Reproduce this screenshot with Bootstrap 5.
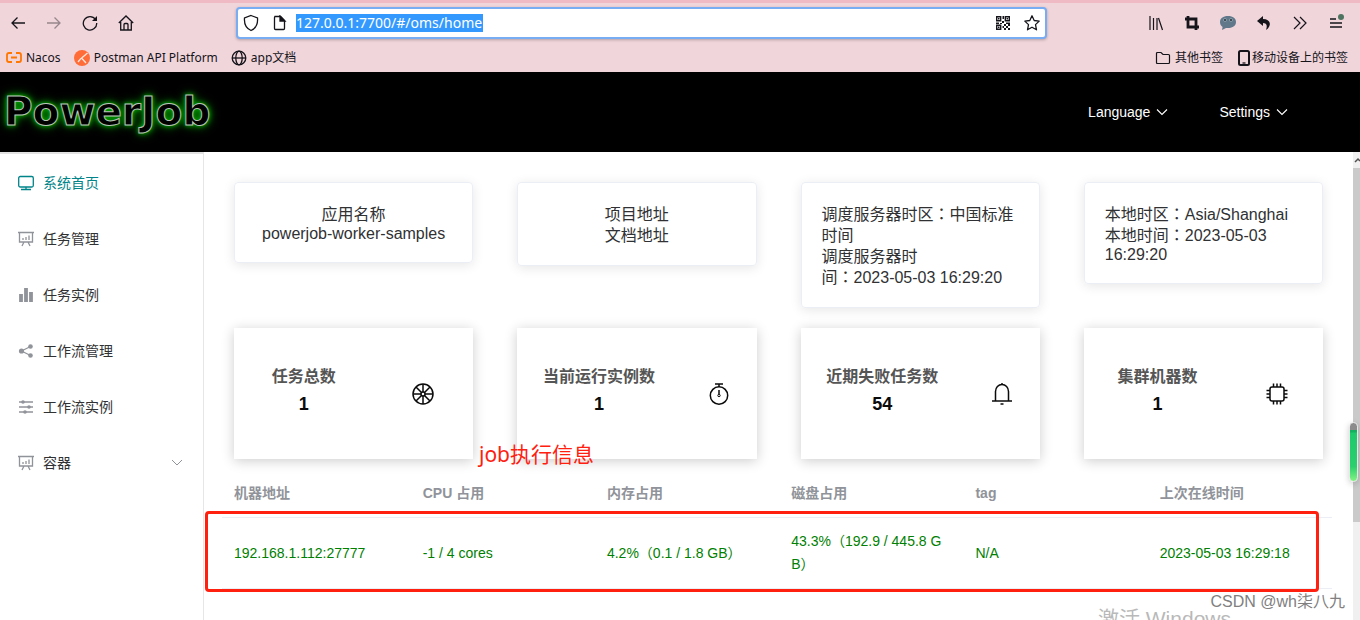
<!DOCTYPE html>
<html lang="zh-CN">
<head>
<meta charset="utf-8">
<meta name="viewport" content="width=device-width, initial-scale=1">
<title>PowerJob</title>
<link href="https://cdn.jsdelivr.net/npm/bootstrap@5.3.0/dist/css/bootstrap.min.css" rel="stylesheet">
<style>
:root{--ui:"Liberation Sans","Noto Sans CJK SC",sans-serif;--chrome:"Noto Sans","Noto Sans CJK SC",sans-serif}
body{font-family:var(--ui);color:#303133;font-size:14px}
svg{display:block;flex:none;fill:none;stroke:currentColor;stroke-width:1.5}
button,a{color:inherit}
/* browser frame */
.browser{background:#f0d5da;border-top:3px solid #efbac3;height:72px;font-family:var(--chrome);color:#15141a}
.toolbar{height:40px;padding-right:6px}
.toolbar svg{stroke-width:1.3}
.tool{width:36px;height:32px;border:0;background:none;padding:0;display:flex;align-items:center;justify-content:center}
.tool:disabled{opacity:.4;color:inherit}
.address{height:32px;margin:0 91px 0 92px;padding:0 4px;border:2px solid #78adf3;border-radius:4px;background:#fff;box-shadow:0 1px 3px rgba(0,0,0,.25)}
.address input{width:187px;height:18px;border:0;padding:0;background:#3399ff;color:#fff;font-size:14px;line-height:18px;outline:0}
.marks{height:29px;font-size:12px;padding:0 12px 0 6px;gap:13px}
.marks a{color:inherit;text-decoration:none;display:flex;align-items:center}
.marks svg{stroke-width:1.3}
/* application */
.topbar{background:#000;height:80px;color:#fff}
.logo{font:bold 39px/48px "DejaVu Sans",sans-serif;color:#000;text-decoration:none;-webkit-text-stroke:1px #b8c4b8;text-shadow:0 0 4px #0a0,0 0 7px #090,0 0 12px #070}
.menus{gap:51px}
.topbar button{border:0;background:none;padding:0;display:flex;align-items:center;gap:6px;color:#fff}
.side{width:204px;border-right:1px solid #e6e6e6;border-top:2px solid #e2e2e2;padding-top:1px}
.side a{height:56px;display:flex;align-items:center;gap:9px;padding:0 20px 0 18px;text-decoration:none;color:#303133}
.side svg{color:#909399;stroke-width:1}
.side a.active,.side a.active svg{color:#008489}
.main{padding:30px 8px 0;min-width:0}
.tiles{--bs-gutter-x:44px;margin:0 0 20px}
.info{border:1px solid #ebeef5;border-radius:4px;padding:21px 20px 19px;font-size:16px;box-shadow:0 2px 12px rgba(0,0,0,.1);line-height:21px}
.info .latin{line-height:18px}
.colon{font-family:"Noto Sans CJK TC",sans-serif;line-height:1}
.stat{height:131px;box-shadow:0 2px 12px rgba(0,0,0,.2);color:#0b0b0b;line-height:21px}
.stat .figure-text{padding-bottom:6px}
.stat h2{font-size:16px;line-height:21px;margin:0 0 7px;font-weight:bold;color:#555}
.stat strong{font-size:18px}
.machines{margin:-9px 13px 0 10px}
.machines table{table-layout:fixed;width:100%;border-collapse:collapse;line-height:23px}
.machines th,.machines td{padding:12px;border-bottom:1px solid #ebeef5;word-break:break-all}
.machines th{color:#909399}
.machines td{color:#008000;height:71px;vertical-align:middle}
.machines col:first-child{width:17%}
.frame{position:absolute;left:-17px;right:13px;top:41px;bottom:-3px;border:3px solid #ff2010;border-radius:4px}
.remark{position:absolute;left:257px;top:-30px;font:21px/28px var(--chrome);color:#ff2010}
.scroll{width:7px;background:#f0f0f0}
.scroll svg{height:16px;color:#505050}
.thumb{background:#cacaca;height:354px}
.gauge{position:absolute;right:2px;top:422px;width:9px;height:60px;border:1px solid #e8e8e8;border-radius:5px;background:linear-gradient(#8c8c8c 7px,#16ae60 7px,#16ae60 9px,#1ec96c 10px,#2bcf6d 75%,#83f383);box-shadow:0 2px 6px rgba(0,0,0,.2)}
.activate{position:absolute;right:129px;bottom:-12px;font-size:21px;line-height:26px;color:#b9b9b9}
.credit{position:absolute;right:15px;bottom:6px;font:16px/24px "Liberation Sans","Noto Sans CJK SC",sans-serif;color:#808080}
</style>
</head>
<body class="vh-100 overflow-hidden d-flex flex-column position-relative">
<header class="browser flex-shrink-0">
  <div class="toolbar d-flex align-items-center">
    <button class="tool" aria-label="后退"><svg width="16" height="16" viewBox="0 0 16 16"><path d="M15 8H2M7.500 2.500 2 8l5.500 5.500"/></svg></button>
    <button class="tool" aria-label="前进" disabled><svg width="16" height="16" viewBox="0 0 16 16"><path d="M1 8h13M8.500 2.500 14 8l-5.500 5.500"/></svg></button>
    <button class="tool" aria-label="刷新"><svg width="16" height="16" viewBox="0 0 16 16"><path d="M13.500 4.500A6.700 6.700 0 1 0 14.700 8"/><path d="M15 1v5h-5z" fill="currentColor" stroke="none"/></svg></button>
    <button class="tool" aria-label="主页"><svg width="16" height="16" viewBox="0 0 16 16"><path d="M.8 8 8 1l7.200 7M2.700 7v8h10.600V7M6 15V9.500q0-1 1-1h2q1 0 1 1V15"/></svg></button>
    <div class="address d-flex align-items-center flex-grow-1">
      <svg width="18" height="18" viewBox="0 0 18 18"><path d="M9 1.500 15.500 4C16 10 13.500 14.500 9 16.500 4.500 14.500 2 10 2.500 4z"/></svg>
      <svg class="mx-2 ps-1" width="20" height="16" viewBox="0 0 16 16"><path d="M2.500 1.500h6l4 4v8q0 1-1 1h-8q-1 0-1-1v-11q0-1 1-1z"/><path d="M8 1v5h5z" fill="currentColor"/></svg>
      <input type="text" value="127.0.0.1:7700/#/oms/home" aria-label="地址">
      <svg class="ms-auto" width="16" height="16" viewBox="0 0 16 16"><path d="M1.700 1.700h4v4h-4zM10.300 1.700h4v4h-4zM1.700 10.300h4v4h-4z" stroke-width="1.400"/><path d="M3 3h1.500v1.500H3zM11.500 3H13v1.500h-1.500zM3 11.500h1.500V13H3zM7.500 1H9v3H7.500zM7 6h2v2H7zM1 7.500h3V9H1zM11 7.500h4V9h-4zM9 9h2v2H9zM11 11h2v2h-2zM13 9h2v2h-2zM9 13h2v2H9zM13 13h2v2h-2zM7.500 11H9v2H7.500zM5 8h2v1H5z" fill="currentColor" stroke="none"/></svg>
      <svg class="ms-2 ps-1" width="22" height="18" viewBox="0 0 18 18"><path d="m9 1.800 2.200 4.700 5 .6-3.700 3.500 1 5.200L9 13.200l-4.500 2.600 1-5.200L1.800 7.100l5-.6z" stroke-linejoin="round"/></svg>
    </div>
    <button class="tool" aria-label="书库"><svg width="16" height="16" viewBox="0 0 16 16"><path d="M2 1v14M5.500 3v12M9 3v12M10.500 3l4 12" stroke-width="1.200"/></svg></button>
    <button class="tool" aria-label="截图"><svg width="16" height="16" viewBox="0 0 16 16"><path d="M4 1v11h11M1 4h11v11" stroke-width="2.800"/></svg></button>
    <button class="tool" aria-label="消息"><svg width="18" height="16" viewBox="0 0 18 16"><path d="M9 1c5 0 8 2.500 8 6s-3 6-8 6H7l-4 2 .6-3C2 11 1 9 1 7c0-3.500 3-6 8-6z" fill="#60788a" stroke="none"/><circle cx="6" cy="5" r="1.600" fill="#38444d" stroke="#92a5b2" stroke-width=".8"/><circle cx="12" cy="5" r="1.600" fill="#38444d" stroke="#92a5b2" stroke-width=".8"/></svg></button>
    <button class="tool" aria-label="撤销"><svg width="16" height="16" viewBox="0 0 16 16"><path d="M7 1 1 6l6 5V8c4 0 4.500 3 3 7 6-4 5-11-3-11z" fill="currentColor" stroke="none"/></svg></button>
    <button class="tool" aria-label="更多工具"><svg width="16" height="16" viewBox="0 0 16 16"><path d="m2 2 6 6-6 6M8 2l6 6-6 6" stroke-width="1.200"/></svg></button>
    <button class="tool" aria-label="菜单"><svg width="18" height="18" viewBox="0 0 18 18"><path d="M3 5h6M3 9h12M3 13h12"/><circle cx="14" cy="3" r="3" fill="#4e7460" stroke="none"/></svg></button>
  </div>
  <nav class="marks d-flex align-items-center">
    <a href="#"><svg class="me-1" width="16" height="14" viewBox="0 0 16 14" color="#ff7600"><path d="M6 2H3Q1 2 1 4v5q0 2 2 2h3M10 2h3q2 0 2 2v5q0 2-2 2h-3M5 6.500h6" stroke-width="1.800"/></svg>Nacos</a>
    <a href="#"><svg class="me-1" width="16" height="16" viewBox="0 0 16 16"><circle cx="8" cy="8" r="8" fill="#ff6c37" stroke="none"/><path d="m13.500 3-7 6M8 8.500l4 4.500M6.500 9 4 12" stroke="#ffe5dc" stroke-width="1.300"/></svg>Postman API Platform</a>
    <a href="#"><svg class="me-1" width="16" height="16" viewBox="0 0 16 16"><circle cx="8" cy="8" r="6.800"/><ellipse cx="8" cy="8" rx="3.200" ry="6.800"/><path d="M1 8h14"/></svg>app文档</a>
    <a href="#" class="ms-auto"><svg class="me-1" width="16" height="16" viewBox="0 0 16 16"><path d="M2.500 2.500H6l2 2h5.500q1 0 1 1v7q0 1-1 1h-11q-1 0-1-1v-9q0-1 1-1z" stroke-width="1.200"/></svg>其他书签</a>
    <a href="#"><svg width="16" height="16" viewBox="0 0 16 16"><rect x="3" y="1" width="10" height="14" rx="1.500" stroke-width="2"/><path d="M6.500 13h3"/></svg>移动设备上的书签</a>
  </nav>
</header>
<div class="topbar d-flex align-items-center flex-shrink-0">
  <a class="logo ms-1" href="#">PowerJob</a>
  <div class="menus d-flex ms-auto me-5 pe-4">
    <button>Language<svg width="12" height="12" viewBox="0 0 12 12"><path d="m1 3.500 5 5 5-5" stroke-width="1.100"/></svg></button>
    <button>Settings<svg width="12" height="12" viewBox="0 0 12 12"><path d="m1 3.500 5 5 5-5" stroke-width="1.100"/></svg></button>
  </div>
</div>
<div class="d-flex flex-grow-1 overflow-hidden">
  <nav class="side flex-shrink-0">
    <a href="#" class="active"><svg width="16" height="16" viewBox="0 0 16 16"><rect x=".7" y="1.500" width="14.600" height="10.500" rx="1.500" stroke-width="1.300"/><path d="M8 12v2.500M3 14.500h10" stroke-width="1.300"/></svg>系统首页</a>
    <a href="#"><svg width="16" height="16" viewBox="0 0 16 16"><path d="M0 1.500h16M1.500 1.500V11h13V1.500M6 11l-2 4M10 11l2 4M5 7v2M8 6v3M11 4.500V9" stroke-width="1.300"/></svg>任务管理</a>
    <a href="#"><svg width="16" height="16" viewBox="0 0 16 16"><path d="M3 7v8M8 1v14M13 5v10" stroke-width="3.800"/></svg>任务实例</a>
    <a href="#"><svg width="16" height="16" viewBox="0 0 16 16"><path d="M12.500 3.500 3.500 8l9 4.500" stroke-width="1.200"/><g fill="currentColor" stroke="none"><circle cx="12.500" cy="3.500" r="2.300"/><circle cx="3.500" cy="8" r="2.600"/><circle cx="12.500" cy="12.500" r="2.300"/></g></svg>工作流管理</a>
    <a href="#"><svg width="16" height="16" viewBox="0 0 16 16"><path d="M1 3h14M1 8h14M1 13h14" stroke-width="1.300"/><g fill="currentColor" stroke="none"><circle cx="5" cy="3" r="1.800"/><circle cx="11" cy="8" r="1.800"/><circle cx="7" cy="13" r="1.800"/></g></svg>工作流实例</a>
    <a href="#"><svg width="16" height="16" viewBox="0 0 16 16"><path d="M0 1.500h16M1.500 1.500V11h13V1.500M6 11l-2 4M10 11l2 4M5 7v2M8 6v3M11 4.500V9" stroke-width="1.300"/></svg>容器<svg class="ms-auto" width="12" height="12" viewBox="0 0 12 12"><path d="m1 3 5 5 5-5"/></svg></a>
  </nav>
  <main class="main flex-grow-1">
    <div class="row tiles align-items-start">
      <div class="col-3"><div class="info text-center"><div>应用名称</div><div class="latin">powerjob-worker-samples</div></div></div>
      <div class="col-3"><div class="info text-center"><div>项目地址</div><div>文档地址</div></div></div>
      <div class="col-3"><div class="info"><div>调度服务器时区<span class="colon" lang="zh-TW">&#65306;</span>中国标准时间</div><div>调度服务器时<br>间<span class="colon" lang="zh-TW">&#65306;</span>2023-05-03 16:29:20</div></div></div>
      <div class="col-3"><div class="info"><div>本地时区<span class="colon" lang="zh-TW">&#65306;</span>Asia/Shanghai</div><div>本地时间<span class="colon" lang="zh-TW">&#65306;</span>2023-05-03</div><div class="latin">16:29:20</div></div></div>
    </div>
    <div class="row tiles">
      <div class="col-3"><div class="stat d-flex align-items-center justify-content-around"><div class="text-center figure-text"><h2>任务总数</h2><strong>1</strong></div>
        <svg width="24" height="24" viewBox="0 0 24 24"><circle cx="12" cy="12" r="10"/><circle cx="12" cy="12" r="2"/><path d="M12 2v8M12 14v8M2 12h8M14 12h8M5 5l5.500 5.500M13.500 13.500 19 19M19 5l-5.500 5.500M10.500 13.500 5 19"/></svg></div></div>
      <div class="col-3"><div class="stat d-flex align-items-center justify-content-around"><div class="text-center figure-text"><h2>当前运行实例数</h2><strong>1</strong></div>
        <svg width="24" height="24" viewBox="0 0 24 24"><circle cx="12" cy="13.500" r="8.700"/><path d="M8 2h8M12 2v3M12 8v4"/><circle cx="12" cy="13.500" r="1.200" stroke-width="1"/></svg></div></div>
      <div class="col-3"><div class="stat d-flex align-items-center justify-content-around"><div class="text-center figure-text"><h2>近期失败任务数</h2><strong>54</strong></div>
        <svg width="24" height="24" viewBox="0 0 24 24"><path d="M5.500 19V9.500a6.500 7 0 0 1 13 0V19M2 19h20M10.500 22h3M12 1v2"/></svg></div></div>
      <div class="col-3"><div class="stat d-flex align-items-center justify-content-around"><div class="text-center figure-text"><h2>集群机器数</h2><strong>1</strong></div>
        <svg width="24" height="24" viewBox="0 0 24 24"><rect x="5" y="5" width="14" height="14" rx="2"/><path d="M8.500 1.500V5M12 1.500V5M15.500 1.500V5M8.500 19v3.500M12 19v3.500M15.500 19v3.500M1.500 8.500H5M1.500 12H5M1.500 15.500H5M19 8.500h3.500M19 12h3.500M19 15.500h3.500"/></svg></div></div>
    </div>
    <div class="machines position-relative">
      <table>
        <colgroup><col><col><col><col><col><col></colgroup>
        <thead><tr><th>机器地址</th><th>CPU 占用</th><th>内存占用</th><th>磁盘占用</th><th>tag</th><th>上次在线时间</th></tr></thead>
        <tbody><tr><td>192.168.1.112:27777</td><td>-1 / 4 cores</td><td>4.2%&#65288;0.1 / 1.8 GB&#65289;</td><td>43.3%&#65288;192.9 / 445.8 G<br>B&#65289;</td><td>N/A</td><td>2023-05-03 16:29:18</td></tr></tbody>
      </table>
      <div class="frame"></div>
      <div class="remark">job执行信息</div>
    </div>
  </main>
  <div class="scroll flex-shrink-0"><svg width="7" viewBox="0 0 7 16"><path d="m2 10 3-3 2 2"/></svg><div class="thumb"></div></div>
</div>
<div class="gauge"></div>
<div class="activate">激活 Windows</div>
<div class="credit">CSDN @wh柒八九</div>
<script src="https://cdn.jsdelivr.net/npm/bootstrap@5.3.0/dist/js/bootstrap.bundle.min.js"></script>
</body>
</html>
